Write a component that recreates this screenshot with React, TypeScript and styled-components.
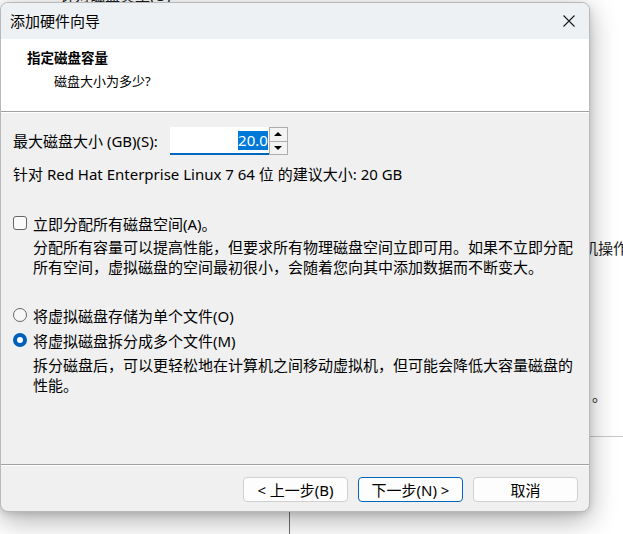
import * as React from 'react'
import styled, { createGlobalStyle } from 'styled-components'

const GlobalStyle = createGlobalStyle`
  html, body {
    margin: 0;
    padding: 0;
    background: #ffffff;
  }
  body {
    font-family: "Noto Sans", "Noto Sans CJK SC", sans-serif;
    font-size: 15px;
    color: #000000;
  }
`

const fontStack = `"Noto Sans", "Noto Sans CJK SC", sans-serif`

const Desktop = styled.div`
  position: relative;
  width: 623px;
  height: 534px;
  overflow: hidden;
  background: #ffffff;
`

const BackText = styled.span<{ x: number; y: number }>`
  position: absolute;
  left: ${p => p.x}px;
  top: ${p => p.y}px;
  font-family: ${fontStack};
  font-size: 15px;
  line-height: 20px;
  color: #1a1a1a;
  white-space: nowrap;
`

const BackLine = styled.div<{ x: number; y: number; w: number; h: number; c: string }>`
  position: absolute;
  left: ${p => p.x}px;
  top: ${p => p.y}px;
  width: ${p => p.w}px;
  height: ${p => p.h}px;
  background: ${p => p.c};
`

const Dialog = styled.div`
  position: absolute;
  left: 0;
  top: 2px;
  width: 590px;
  height: 510px;
  box-sizing: border-box;
  display: flex;
  flex-direction: column;
  background: #f0f0f0;
  border: 1px solid #b9b9b9;
  border-radius: 8px;
  overflow: hidden;
  box-shadow: 0 8px 28px rgba(0, 0, 0, 0.32), 0 2px 6px rgba(0, 0, 0, 0.12);
  font-family: ${fontStack};
`

const TitleBar = styled.div`
  height: 36px;
  flex: none;
  display: flex;
  align-items: center;
  justify-content: space-between;
  padding: 0 14px 0 9px;
  background: #eef1f4;
`

const TitleText = styled.span`
  font-size: 15px;
  line-height: 20px;
  color: #000;
`

const CloseButton = styled.div`
  width: 12px;
  height: 12px;
  display: flex;
  align-items: center;
  justify-content: center;
`

const Header = styled.div`
  height: 72px;
  flex: none;
  box-sizing: border-box;
  padding: 9px 0 0 26px;
  background: #ffffff;
`

const HeaderTitle = styled.div`
  font-size: 13.5px;
  font-weight: 700;
  line-height: 20px;
`

const HeaderSub = styled.div`
  margin-top: 3px;
  padding-left: 27px;
  font-size: 13px;
  line-height: 20px;
`

const Etched = styled.div`
  flex: none;
  height: 0;
  border-top: 1px solid #a0a0a0;
  border-bottom: 1px solid #ffffff;
`

const Body = styled.div`
  flex: 1;
  display: flex;
  flex-direction: column;
  padding: 14px 0 0 12px;
`

const SizeRow = styled.div`
  display: flex;
  align-items: center;
  height: 28px;
`

const SizeLabel = styled.label`
  font-size: 15px;
  line-height: 20px;
  margin-right: 12px;
`

const NumberField = styled.div`
  width: 99px;
  height: 28px;
  box-sizing: border-box;
  display: flex;
  align-items: center;
  justify-content: flex-end;
  padding-right: 1px;
  background: #ffffff;
  border-bottom: 2px solid #0067c0;
`

const Selected = styled.span`
  background: #0078d7;
  color: #ffffff;
  font-size: 15px;
  line-height: 19px;
`

const Spinner = styled.div`
  width: 19px;
  height: 28px;
  box-sizing: border-box;
  display: flex;
  flex-direction: column;
  border: 1px solid #adadad;
  background: #adadad;
  gap: 1px;
`

const SpinButton = styled.div`
  flex: 1;
  display: flex;
  align-items: center;
  justify-content: center;
  background: #f3f3f3;
`

const Line = styled.div<{ top?: number; indent?: number }>`
  margin-top: ${p => p.top || 0}px;
  padding-left: ${p => p.indent || 0}px;
  font-size: 15px;
  line-height: 20px;
  white-space: nowrap;
`

const OptionRow = styled.div<{ top: number }>`
  margin-top: ${p => p.top}px;
  display: flex;
  align-items: center;
  gap: 6px;
  height: 20px;
  font-size: 15px;
`

const CheckBox = styled.span`
  width: 14px;
  height: 14px;
  box-sizing: border-box;
  border: 1px solid #666666;
  border-radius: 3px;
  background: #fafafa;
`

const Radio = styled.span<{ checked?: boolean }>`
  width: 14px;
  height: 14px;
  box-sizing: border-box;
  border-radius: 50%;
  border: ${p => (p.checked ? '4px solid #005fb8' : '1px solid #666666')};
  background: ${p => (p.checked ? '#ffffff' : '#f7f7f7')};
`

const Footer = styled.div`
  height: 45px;
  flex: none;
  box-sizing: border-box;
  display: flex;
  justify-content: flex-end;
  gap: 10px;
  padding: 11px 11px 0 0;
`

const Button = styled.div<{ primary?: boolean }>`
  width: 105px;
  height: 25px;
  box-sizing: border-box;
  display: flex;
  align-items: center;
  justify-content: center;
  border: 1px solid ${p => (p.primary ? '#0067c0' : '#d0d0d0')};
  border-radius: 4px;
  background: #fdfdfd;
  font-size: 15px;
  line-height: 20px;
`

const Arrow = ({ up }: { up?: boolean }) => (
  <svg width="8" height="4" viewBox="0 0 8 4">
    <polygon points={up ? '0,4 8,4 4,0' : '0,0 8,0 4,4'} fill="#000" />
  </svg>
)

const App: React.FC = () => (
  <Desktop>
    <GlobalStyle />
    <BackText x={60} y={-15}>针对磁盘类型(O)</BackText>
    <BackText x={583} y={238}>机操作</BackText>
    <BackText x={592} y={385}>。</BackText>
    <BackLine x={590} y={436} w={33} h={1} c="#c9c9c9" />
    <BackLine x={289} y={505} w={1} h={29} c="#707070" />
    <Dialog>
      <TitleBar>
        <TitleText>添加硬件向导</TitleText>
        <CloseButton>
          <svg width="12" height="12" viewBox="0 0 12 12">
            <path d="M0.5 0.5 L11.5 11.5 M11.5 0.5 L0.5 11.5" stroke="#1a1a1a" strokeWidth="1.1" />
          </svg>
        </CloseButton>
      </TitleBar>
      <Header>
        <HeaderTitle>指定磁盘容量</HeaderTitle>
        <HeaderSub>磁盘大小为多少?</HeaderSub>
      </Header>
      <Etched />
      <Body>
        <SizeRow>
          <SizeLabel>最大磁盘大小 (GB)(S):</SizeLabel>
          <NumberField>
            <Selected>20.0</Selected>
          </NumberField>
          <Spinner>
            <SpinButton><Arrow up /></SpinButton>
            <SpinButton><Arrow /></SpinButton>
          </Spinner>
        </SizeRow>
        <Line top={9}>针对 Red Hat Enterprise Linux 7 64 位 的建议大小: 20 GB</Line>
        <OptionRow top={29}>
          <CheckBox />
          <span>立即分配所有磁盘空间(A)。</span>
        </OptionRow>
        <Line top={4} indent={20}>分配所有容量可以提高性能，但要求所有物理磁盘空间立即可用。如果不立即分配</Line>
        <Line indent={20}>所有空间，虚拟磁盘的空间最初很小，会随着您向其中添加数据而不断变大。</Line>
        <OptionRow top={28}>
          <Radio />
          <span>将虚拟磁盘存储为单个文件(O)</span>
        </OptionRow>
        <OptionRow top={5}>
          <Radio checked />
          <span>将虚拟磁盘拆分成多个文件(M)</span>
        </OptionRow>
        <Line top={5} indent={20}>拆分磁盘后，可以更轻松地在计算机之间移动虚拟机，但可能会降低大容量磁盘的</Line>
        <Line indent={20}>性能。</Line>
      </Body>
      <Etched />
      <Footer>
        <Button>&lt; 上一步(B)</Button>
        <Button primary>下一步(N) &gt;</Button>
        <Button>取消</Button>
      </Footer>
    </Dialog>
  </Desktop>
)

export default App
